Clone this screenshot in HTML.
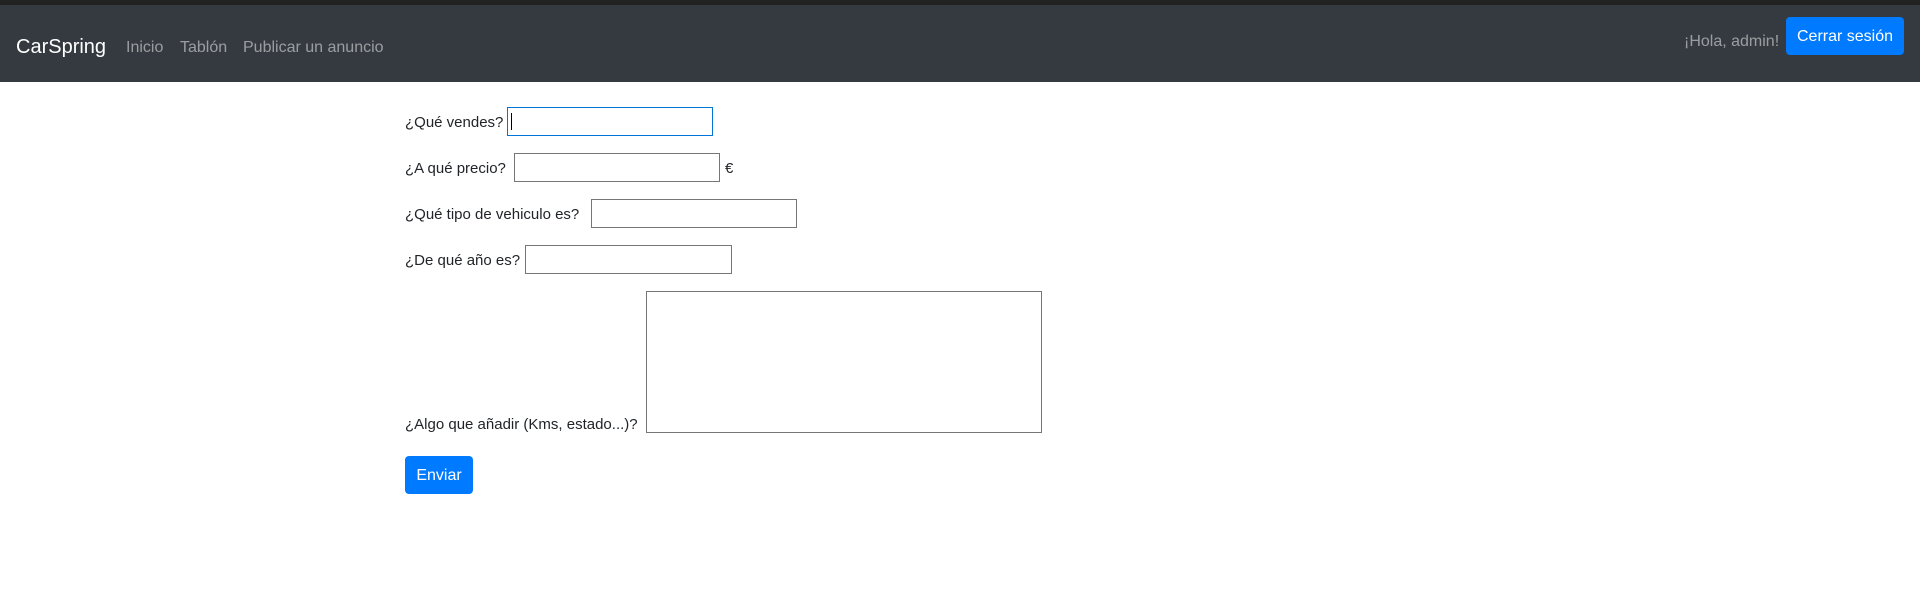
<!DOCTYPE html>
<html><head><meta charset="utf-8"><style>
*{box-sizing:border-box;margin:0;padding:0}
body{width:1920px;height:593px;background:#fff;font-family:"Liberation Sans",sans-serif;font-size:16px;color:#212529;position:relative;overflow:hidden}
.top{position:absolute;left:0;top:0;width:1920px;height:5px;background:#222}
.nav{position:absolute;left:0;top:5px;width:1920px;height:77px;background:#343a40}
.nav span{position:absolute;top:4px;line-height:77px;white-space:nowrap}
.brand{left:16px;font-size:20px;color:#fff}
.link{color:rgba(255,255,255,.5);font-size:16px}
.btn{position:absolute;background:#007bff;color:#fff;border-radius:4px;font-size:16px;text-align:center}
.lbl{position:absolute;left:405px;white-space:nowrap;font-size:15px}
.in{position:absolute;border:1px solid #767676;background:#fff}
</style></head><body>
<div class="top"></div>
<div class="nav">
<span class="brand">CarSpring</span>
<span class="link" style="left:126px">Inicio</span>
<span class="link" style="left:180px">Tablón</span>
<span class="link" style="left:243px">Publicar un anuncio</span>
<span class="link" style="left:1684px;top:-2px">¡Hola, admin!</span>
</div>
<div class="btn" style="left:1786px;top:17px;width:118px;height:38px;line-height:40px">Cerrar sesión</div>

<div class="lbl" style="top:114px">¿Qué vendes?</div>
<div class="in" style="left:507px;top:107px;width:206px;height:29px;border:1px solid #0074d9"><div style="position:absolute;left:3px;top:5px;width:1px;height:17px;background:#000"></div></div>
<div class="lbl" style="top:160px">¿A qué precio?</div>
<div class="in" style="left:514px;top:153px;width:206px;height:29px"></div>
<div class="lbl" style="left:725px;top:160px">€</div>
<div class="lbl" style="top:206px">¿Qué tipo de vehiculo es?</div>
<div class="in" style="left:591px;top:199px;width:206px;height:29px"></div>
<div class="lbl" style="top:252px">¿De qué año es?</div>
<div class="in" style="left:525px;top:245px;width:207px;height:29px"></div>
<div class="lbl" style="top:416px">¿Algo que añadir (Kms, estado...)?</div>
<div class="in" style="left:646px;top:291px;width:396px;height:142px"></div>
<div class="btn" style="left:405px;top:456px;width:68px;height:38px;line-height:40px">Enviar</div>
</body></html>
